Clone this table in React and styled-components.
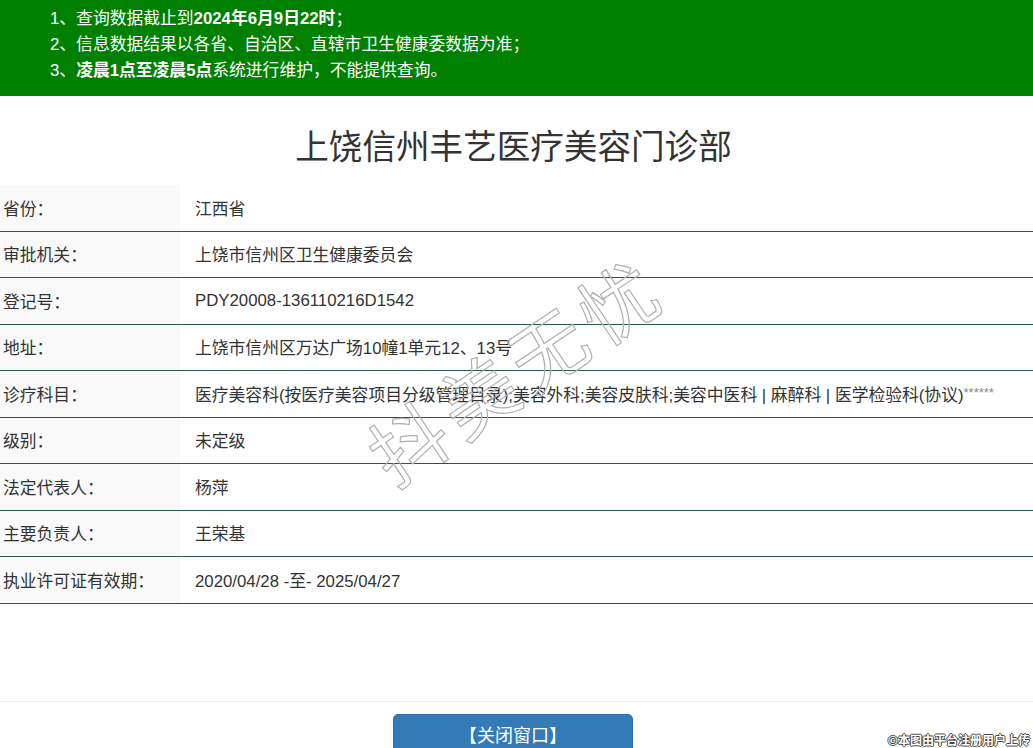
import styled, { createGlobalStyle } from "styled-components";

const rows = [
  { label: "省份：", value: "江西省" },
  { label: "审批机关：", value: "上饶市信州区卫生健康委员会" },
  { label: "登记号：", value: "PDY20008-136110216D1542" },
  { label: "地址：", value: "上饶市信州区万达广场10幢1单元12、13号" },
  {
    label: "诊疗科目：",
    value: "医疗美容科(按医疗美容项目分级管理目录);美容外科;美容皮肤科;美容中医科 | 麻醉科 | 医学检验科(协议)",
    stars: true,
  },
  { label: "级别：", value: "未定级" },
  { label: "法定代表人：", value: "杨萍" },
  { label: "主要负责人：", value: "王荣基" },
  { label: "执业许可证有效期：", value: "2020/04/28 -至- 2025/04/27" },
];

export default function App() {
  return (
    <Page>
      <GlobalStyle />
      <Notice>
        <li>
          1、查询数据截止到<b>2024年6月9日22时</b>；
        </li>
        <li>2、信息数据结果以各省、自治区、直辖市卫生健康委数据为准；</li>
        <li>
          3、<b>凌晨1点至凌晨5点</b>系统进行维护，不能提供查询。
        </li>
      </Notice>

      <Title>上饶信州丰艺医疗美容门诊部</Title>

      <Table>
        {rows.map((row) => (
          <Row key={row.label}>
            <Label>{row.label}</Label>
            <Value>
              {row.value}
              {row.stars && <Stars>******</Stars>}
            </Value>
          </Row>
        ))}
      </Table>

      <Footer>
        <CloseButton>【关闭窗口】</CloseButton>
      </Footer>

      <Watermark>抖美无忧</Watermark>
      <Credit>©本图由平台注册用户上传</Credit>
    </Page>
  );
}

const GlobalStyle = createGlobalStyle`
  html, body {
    margin: 0;
    padding: 0;
    overflow: hidden;
    background: #fff;
  }
  body {
    font-family: "Liberation Sans", "Noto Sans CJK SC", sans-serif;
    color: #333;
  }
`;

const Page = styled.div`
  position: relative;
  width: 1033px;
  height: 748px;
  overflow: hidden;
`;

const Notice = styled.ul`
  margin: 0;
  list-style: none;
  background: #008000;
  color: #fff;
  font-size: 16.8px;
  line-height: 26px;
  padding: 6px 0 12px 50px;

  b {
    font-weight: 700;
  }
`;

const Title = styled.h1`
  margin: 32px 0 17px;
  padding-right: 6px;
  text-align: center;
  font-size: 33.6px;
  line-height: 40px;
  font-weight: 400;
  color: #333;
`;

const Table = styled.div`
  display: flex;
  flex-direction: column;
`;

const Row = styled.div`
  display: grid;
  grid-template-columns: 180px 1fr;
  height: 46.5px;
  box-sizing: border-box;
  border-bottom: 1px solid #245c47;
  font-size: 16.8px;
`;

const Label = styled.div`
  display: flex;
  align-items: center;
  padding-left: 3px;
  background: #f9f9f9;
  color: #333;
`;

const Value = styled.div`
  display: flex;
  align-items: center;
  padding-left: 15px;
  white-space: nowrap;
  color: #333;
`;

const Stars = styled.span`
  color: #888;
  font-size: 13px;
  margin-bottom: 3px;
`;

const Footer = styled.div`
  margin-top: 97px;
  border-top: 1px solid #ececec;
  padding: 12px 7px 0 0;
  display: flex;
  justify-content: center;
`;

const CloseButton = styled.button`
  width: 240px;
  height: 40px;
  border: 1px solid #2e6da4;
  border-radius: 5px;
  background: #337ab7;
  color: #fff;
  font-family: "Liberation Sans", "Noto Sans CJK SC", sans-serif;
  font-size: 18px;
  cursor: pointer;
`;

const Watermark = styled.div`
  position: absolute;
  left: 511px;
  top: 370px;
  transform: translate(-50%, -50%) rotate(-34deg);
  font-family: "Noto Sans CJK SC", sans-serif;
  font-size: 76px;
  letter-spacing: 8px;
  text-indent: 8px;
  line-height: 1;
  color: transparent;
  -webkit-text-stroke: 1.2px #b0b0b0;
  white-space: nowrap;
  pointer-events: none;
`;

const Credit = styled.div`
  position: absolute;
  right: 3px;
  bottom: 1px;
  font-family: "Noto Sans CJK SC", sans-serif;
  font-size: 12px;
  font-weight: 700;
  line-height: 14px;
  color: #fff;
  text-shadow: 1px 0 #444, -1px 0 #444, 0 1px #444, 0 -1px #444;
`;
